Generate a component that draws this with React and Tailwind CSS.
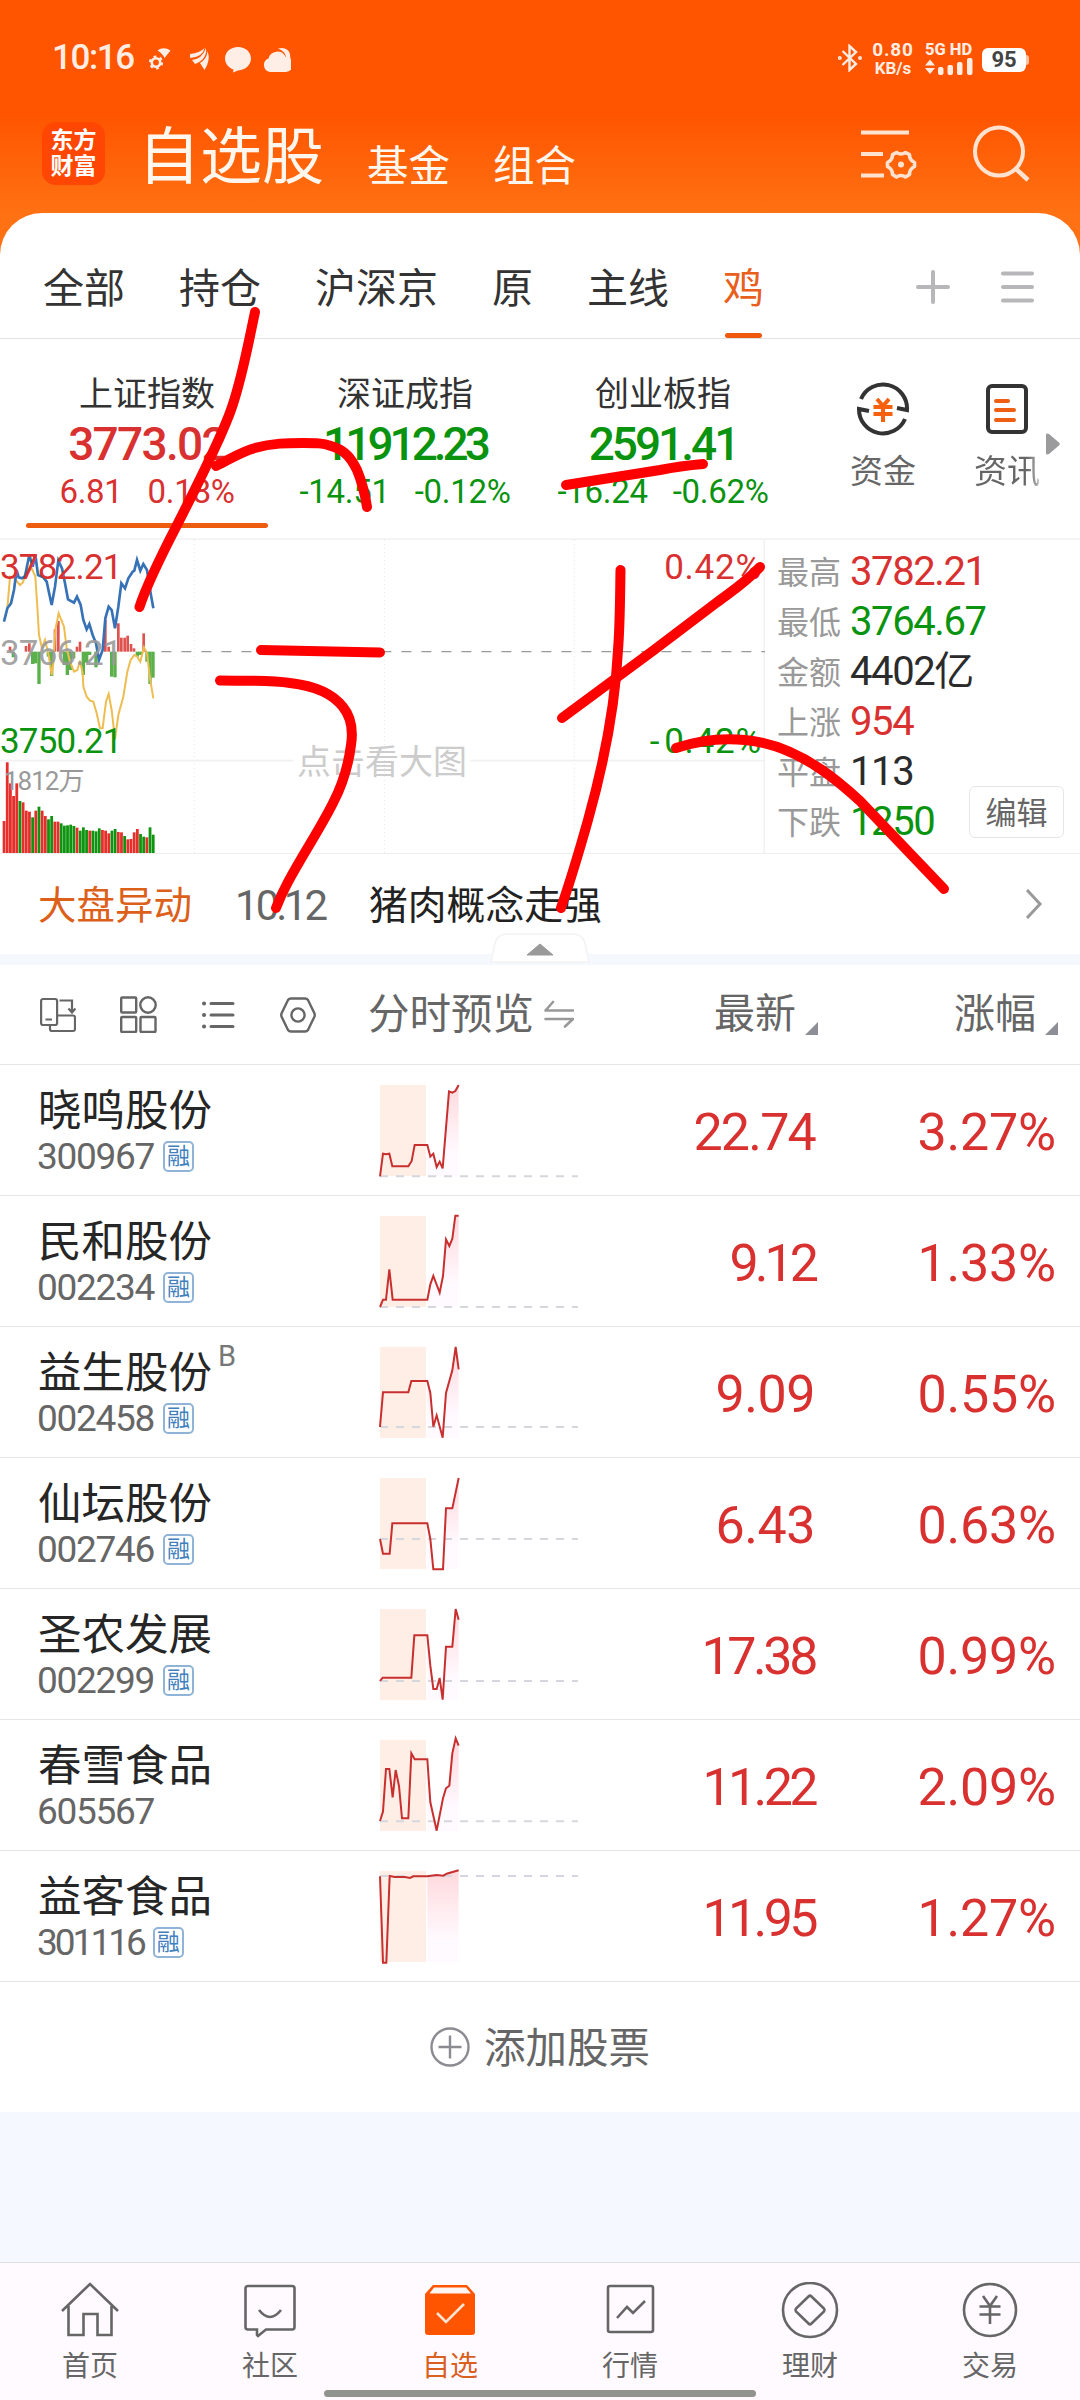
import React from 'react';

const RED = 'text-[#d93030]';
const GREEN = 'text-[#0a930f]';

const tabs = ['全部', '持仓', '沪深京', '原', '主线', '鸡'];

const indices = [
    { name: '上证指数', value: '3773.02', diff: '6.81', pct: '0.18%', color: RED, spacing: 'tracking-[-1.7px]', active: true },
    { name: '深证成指', value: '11912.23', diff: '-14.51', pct: '-0.12%', color: GREEN, spacing: 'tracking-[-4px]' },
    { name: '创业板指', value: '2591.41', diff: '-16.24', pct: '-0.62%', color: GREEN, spacing: 'tracking-[-3px]' },
];

const stats = [
    { label: '最高', value: '3782.21', color: RED },
    { label: '最低', value: '3764.67', color: GREEN },
    { label: '金额', value: '4402亿', color: 'text-[#2b2b2b]' },
    { label: '上涨', value: '954', color: RED },
    { label: '平盘', value: '113', color: 'text-[#2b2b2b]' },
    { label: '下跌', value: '1250', color: GREEN },
];

// base = y of the dashed previous-close line
const stocks = [
    { name: '晓鸣股份', code: '300967', margin: true, price: '22.74', spacing: 'tracking-[-1.8px]', pct: '3.27%', base: 274, line: '0,274 9,206 18,208 28,206 37,244 85,244 95,228 104,180 142,180 151,215 160,206 170,246 179,230 188,250 207,19 217,23 226,18 236,0' },
    { name: '民和股份', code: '002234', margin: true, price: '9.12', spacing: 'tracking-[-4px]', pct: '1.33%', base: 273, line: '0,273 9,251 18,251 28,160 38,251 142,251 151,205 160,180 179,230 189,180 198,70 208,90 217,68 226,-1 236,-1' },
    { name: '益生股份', code: '002458', margin: true, tag: 'B', price: '9.09', spacing: 'tracking-[-0.5px]', pct: '0.55%', base: 240, line: '0,240 9,136 85,136 94,102 142,102 151,138 160,239 170,205 188,272 198,138 217,70 227,0 236,67' },
    { name: '仙坛股份', code: '002746', margin: true, price: '6.43', spacing: 'tracking-[-0.5px]', pct: '0.63%', base: 183, line: '0,183 9,227 29,227 37,136 142,136 151,183 160,274 189,274 198,91 217,91 236,0' },
    { name: '圣农发展', code: '002299', margin: true, price: '17.38', spacing: 'tracking-[-3.4px]', pct: '0.99%', base: 216, line: '0,216 8,206 94,206 103,79 142,79 151,170 160,240 170,240 179,207 188,272 198,113 217,113 227,0 236,32' },
    { name: '春雪食品', code: '605567', margin: false, price: '11.22', spacing: 'tracking-[-3.6px]', pct: '2.09%', base: 244, line: '0,243 9,215 18,87 28,87 38,172 47,90 57,138 66,235 85,235 94,40 104,58 142,58 151,187 170,272 189,175 198,145 208,137 217,40 227,-5 236,17' },
    { name: '益客食品', code: '301116', margin: true, price: '11.95', spacing: 'tracking-[-3.6px]', pct: '1.27%', base: 15, line: '0,16 9,275 19,275 29,15 45,18 75,18 90,21 100,16 142,16 170,12 190,14 200,8 236,-2' },
];

const upBars = [[30, 320], [78, 318], [88, 310], [165, 268], [175, 243], [231, 320], [240, 305], [316, 240], [326, 320], [355, 250], [364, 293], [374, 293], [383, 287], [393, 312], [402, 325], [431, 280]];
const downBars = [[40, 352], [98, 372], [107, 370], [117, 432], [145, 350], [155, 408], [193, 375], [202, 405], [211, 390], [221, 355], [250, 405], [260, 368], [269, 345], [288, 382], [335, 410], [345, 412], [412, 350], [421, 345], [441, 365], [450, 432], [459, 413]];
const volumes = [843, 667, 730, 768, 730, 783, 787, 812, 815, 832, 812, 800, 812, 828, 838, 828, 845, 845, 850, 857, 856, 854, 858, 863, 872, 862, 870, 872, 872, 874, 865, 870, 872, 880, 872, 867, 876, 877, 888, 898, 897, 877, 867, 882, 890, 892, 862, 884];
const volumeSides = 'rrrrrgrrrgrgrrggrrgggggrgggrgggrrrggrrgrrrrggrgg';

const Spark = ({ line, base, id }) => {
    const tail = line.split(' ').filter((p) => Number(p.split(',')[0]) >= 142);
    return (
        <svg width="198" height="91" viewBox="0 0 594 273" className="overflow-visible">
            <defs>
                <linearGradient id={id} gradientUnits="userSpaceOnUse" x1="0" y1="0" x2="0" y2="273">
                    <stop offset="0" stopColor="#ffd9dd" />
                    <stop offset="0.75" stopColor="#fffaff" />
                </linearGradient>
            </defs>
            <rect width="138" height="273" fill="#ffeee6" />
            <polygon points={`142,273 ${tail.join(' ')} 236,273`} fill={`url(#${id})`} />
            <path d={`M0 ${base}H594`} stroke="#d6d6de" strokeWidth="6" strokeDasharray="24 24" />
            <polyline points={line} fill="none" stroke="#c8302f" strokeWidth="6" />
        </svg>
    );
};

const StatusBar = () => (
    <div className="flex h-[116px] items-center pl-[52px] pr-[51px] text-[#ffece2]">
        <span className="mt-[-2px] w-[97px] text-[35px] font-medium leading-none tracking-[-1.4px]">10:16</span>
        <svg width="142" height="28" viewBox="0 0 142 28" fill="#ffeee6" className="mt-px">
            <circle cx="7" cy="17.500" r="4.200" fill="none" stroke="#ffeee6" strokeWidth="2.600" />
            <circle cx="7" cy="17.500" r="6" fill="none" stroke="#ffeee6" strokeWidth="2.200" strokeDasharray="2.800 3.480" />
            <path d="M8.500 5.500Q14.500 1 21.500 5.500L15.500 13Q14 9 8.500 5.500Z" />
            <path d="M41 9Q51 8 55.500 3Q54 12 41 13ZM43 15Q53 14 57 3Q58.500 14 46 19ZM51 18Q58 14 58.500 6Q62 15 55.500 25Z" />
            <path d="M89 2c7.500 0 13 5 13 11.500S96.500 25 89 25.500l-5 2 .5-3C79.500 22.500 76 18.500 76 13.500 76 7 81.500 2 89 2Z" />
            <path d="M121 27a7 7 0 0 1-1.500-13.500a9 9 0 0 1 17-1.500a7.500 7.500 0 0 1 .5 15Z" />
            <path d="M129 3.500q7-2 11 3q2 4 1 12q-1-4-4-5q0-7-8-10Z" />
        </svg>
        <div className="ml-auto flex items-center">
            <svg width="24" height="28" viewBox="0 0 24 28" fill="none" stroke="#ffece2" strokeWidth="2.400" className="mr-[9px]">
                <path d="M4.500 7L18 20L11.500 26V2L18 8L4.500 21" />
                <circle cx="1.800" cy="14" r="0.800" />
                <circle cx="22" cy="14" r="0.800" />
            </svg>
            <div className="mr-[10px] w-[44px] text-center text-[17px] font-bold leading-[18px]">
                <div className="text-[19px] leading-[19px] tracking-[0.8px]">0.80</div>
                <div>KB/s</div>
            </div>
            <div className="mr-[8px] w-[49px]">
                <div className="whitespace-nowrap text-[16.5px] font-extrabold leading-[16px]">5G HD</div>
                <svg width="49" height="17" viewBox="0 0 49 17" fill="#ffece2">
                    <path d="M0 7.500L5 1.500L10 7.500ZM0 10L5 16L10 10Z" />
                    <rect x="13" y="9" width="5.500" height="8" rx="2" />
                    <rect x="22.500" y="7" width="5.500" height="10" rx="2" />
                    <rect x="32" y="4" width="5.500" height="13" rx="2" />
                    <rect x="42" y="0" width="5.500" height="17" rx="2" />
                </svg>
            </div>
            <div className="mt-[3px] flex items-center">
                <div className="flex h-[24px] w-[44px] items-center justify-center rounded-[6px] bg-white text-[22px] font-bold leading-none text-[#444]">95</div>
                <div className="h-[10px] w-[3px] rounded-r bg-[#ffc4a5]" />
            </div>
        </div>
    </div>
);

const TitleBar = () => (
    <div className="flex h-[97px] items-start pl-[42px] pr-[50px] text-[#fff7ee]">
        <div className="mt-[6px] flex h-[63px] w-[63px] flex-col items-center justify-center rounded-[14px] bg-[#ff4602] text-[23px] font-bold leading-[26px] text-white">
            <span>东方</span>
            <span>财富</span>
        </div>
        <span className="ml-[33px] mt-[11px] text-[62px] leading-none">自选股</span>
        <span className="ml-[43px] mt-[30px] text-[41.5px] leading-none">基金</span>
        <span className="ml-[43px] mt-[30px] text-[41.5px] leading-none">组合</span>
        <svg width="58" height="54" viewBox="0 0 58 54" fill="none" stroke="#ffe3d0" strokeWidth="4" className="ml-auto mt-[12px]">
            <path d="M1 4.500H49M1 26H23M1 47.500H24" />
            <path d="M36.500 24.500Q41 27.500 45.500 24.500L49.500 26.700Q49.500 32 54.500 34.500V38.500Q49.500 41 49.500 46.500L45.500 49Q41 46 36.500 49L32.500 46.500Q32.500 41 27.500 38.500V34.500Q32.500 32 32.500 26.700Z" strokeLinejoin="round" strokeWidth="3.600" />
            <circle cx="41" cy="36.500" r="3" fill="#ffe3d0" stroke="none" />
        </svg>
        <svg width="58" height="58" viewBox="0 0 58 58" fill="none" stroke="#ffe3d0" strokeWidth="4" className="ml-[54px] mt-[9px]">
            <circle cx="27" cy="26.500" r="24" />
            <path d="M43 43L56 55" strokeWidth="4.500" />
        </svg>
    </div>
);

const TabRow = () => (
    <div className="flex h-[126px] items-center gap-[54px] border-b border-[#e2e2e2] pl-[43px] pr-[46px]">
        {tabs.map((t) => (
            <div key={t} className={t === '鸡' ? 'relative flex h-full items-center text-[#e8601c]' : 'relative flex h-full items-center text-[#333]'}>
                <span className="mt-[27px] text-[41px] leading-none">{t}</span>
                {t === '鸡' && <div className="absolute bottom-0 left-[2px] h-[5px] w-[37px] rounded-full bg-[#f0580d]" />}
            </div>
        ))}
        <svg width="34" height="34" viewBox="0 0 34 34" stroke="#b7b7ba" strokeWidth="4" strokeLinecap="round" className="ml-auto mt-[22px]">
            <path d="M17 2V32M2 17H32" />
        </svg>
        <svg width="33" height="34" viewBox="0 0 33 34" stroke="#b7b7ba" strokeWidth="4" strokeLinecap="round" className="ml-[-3px] mt-[22px]">
            <path d="M2 3.500H31M2 17H31M2 30.500H31" />
        </svg>
    </div>
);

const IndexRow = () => (
    <div className="relative flex h-[201px] border-b-2 border-[#f4f4f5] pl-[18px]">
        {indices.map((x) => (
            <div key={x.name} className="relative flex w-[258px] flex-col items-center">
                <span className="mt-[38px] text-[34px] leading-none text-[#333]">{x.name}</span>
                <span className={`mt-[10px] text-[46px] font-medium leading-none ${x.spacing} ${x.color}`}>{x.value}</span>
                <div className={`mt-[8px] flex gap-[25px] whitespace-nowrap text-[33px] leading-none tracking-[-0.3px] ${x.color}`}>
                    <span>{x.diff}</span>
                    <span>{x.pct}</span>
                </div>
                {x.active && <div className="absolute bottom-[10px] left-[8px] h-[5px] w-[242px] rounded-full bg-[#ee5c10]" />}
            </div>
        ))}
        <div className="ml-[58px] flex flex-col items-center">
            <svg width="54" height="54" viewBox="0 0 54 54" fill="none" stroke="#333" strokeWidth="4" className="mt-[43px]">
                <path d="M5 17A24 24 0 0 1 51 28L41 26" />
                <path d="M49 37A24 24 0 0 1 3 27L13 29" />
                <path d="M21 17L27 24L33 17M17.500 25H36.500M17.500 32H36.500M27 24V40" stroke="#f6600e" />
            </svg>
            <span className="mt-[19px] text-[33px] leading-none text-[#666]">资金</span>
        </div>
        <div className="ml-[58px] flex flex-col items-center">
            <svg width="42" height="50" viewBox="0 0 42 50" fill="none" stroke="#333" strokeWidth="4" strokeLinecap="round" className="mt-[45px]">
                <rect x="2" y="2" width="38" height="46" rx="4" />
                <path d="M10 17H22M10 26H28M10 36H28" stroke="#ee5f14" />
            </svg>
            <span className="mt-[21px] bg-gradient-to-r from-[#666] from-80% to-[#bbb] bg-clip-text text-[33px] leading-none text-transparent">资讯</span>
        </div>
        <svg width="14" height="22" viewBox="0 0 14 22" fill="#9b9b9e" className="ml-[6px] mt-[94px]">
            <path d="M0 1.500Q0 0 3 1L13.500 10Q14 11 13.500 12L3 21Q0 22 0 20.500Z" />
        </svg>
    </div>
);

const IndexChart = () => (
    <div className="relative h-[313px] w-[765px]">
        <svg width="765" height="313" viewBox="0 0 2295 939" fill="none">
            <path d="M583 0V939M1153 0V939M1723 0V939" stroke="#e6e6e6" strokeWidth="3" strokeDasharray="3 9" />
            <path d="M0 662H880M1410 662H2295M2293 0V939" stroke="#f3f0f2" strokeWidth="5" />
            <path d="M484 335H2295" stroke="#999" strokeWidth="4" strokeDasharray="30 30" />
            {upBars.map(([x, y]) => <rect key={x} x={x - 4} y={y} width="8" height={335 - y} fill="#dd5350" />)}
            {downBars.map(([x, y]) => <rect key={x} x={x - 5} y="335" width="10" height={y - 335} fill="#5cb04c" />)}
            {volumes.map((y, i) => (
                <rect key={i} x={8 + i * 9.52} y={y} width="8.400" height={939 - y} fill={volumeSides[i] === 'r' ? '#e62f2b' : '#0e9410'} />
            ))}
            <polyline points="22,205 30,110 40,112 60,135 68,128 80,100 95,85 106,110 112,200 117,285 126,325 135,300 145,340 155,405 160,370 166,270 176,220 192,260 200,325 210,365 222,395 232,390 240,362 248,400 250,440 260,470 270,482 280,485 290,520 300,565 308,565 318,485 326,462 335,510 345,598 355,525 370,470 382,395 392,360 403,345 412,350 421,365 432,322 441,340 450,415 460,475" stroke="#eebd50" strokeWidth="6" />
            <polyline points="12,245 22,205 33,190 42,150 50,90 56,112 66,115 75,108 88,45 98,80 106,45 114,105 130,112 140,125 155,195 165,140 175,62 186,85 195,130 204,178 222,188 231,170 242,195 250,240 260,268 268,252 278,285 288,310 297,360 308,330 316,235 326,200 335,210 345,265 355,200 364,130 375,145 385,115 398,95 403,92 411,60 421,92 430,72 441,90 452,160 460,205" stroke="#3672b5" strokeWidth="8" />
        </svg>
        <div className="absolute left-0 top-[10px] text-[35px] leading-none tracking-[-0.8px] text-[#d93030]">3782.21</div>
        <div className="absolute left-0 top-[96px] text-[35px] leading-none tracking-[-0.8px] text-[#999]/90">3766.21</div>
        <div className="absolute left-0 top-[184px] text-[35px] leading-none tracking-[-0.8px] text-[#0a930f]">3750.21</div>
        <div className="absolute left-[4px] top-[228px] text-[26px] leading-none tracking-[-1px] text-[#999]">1812万</div>
        <div className="absolute right-[3px] top-[10px] text-[35px] leading-none tracking-[0.8px] text-[#d93030]">0.42%</div>
        <div className="absolute right-[3px] top-[184px] text-[35px] leading-none tracking-[0.8px] text-[#0a930f]"><span className="mr-[4px]">-</span>0.42%</div>
        <div className="absolute left-[297px] top-[205px] text-[34px] leading-none text-[#ccc]">点击看大图</div>
    </div>
);

const MarketPanel = () => (
    <div className="flex h-[314px] border-b border-[#eeeeef]">
        <IndexChart />
        <div className="relative flex-1 pl-[12px] pt-[7px]">
            {stats.map((s) => (
                <div key={s.label} className="flex h-[50px] items-center leading-none">
                    <span className="mt-[2px] w-[73px] text-[32px] text-[#999]">{s.label}</span>
                    <span className={`text-[40px] tracking-[-1.4px] ${s.color}`}>{s.value}</span>
                </div>
            ))}
            <div className="absolute right-[16px] top-[246px] flex h-[52px] w-[95px] items-center justify-center rounded-[6px] border border-[#e6e6e6] bg-white pt-[2px] text-[31px] leading-none text-[#666]">编辑</div>
        </div>
    </div>
);

const NewsRow = () => (
    <div className="relative flex h-[111px] items-start border-b-[11px] border-[#f5f9fe] pl-[38px] pr-[37px] leading-none">
        <span className="mt-[33px] text-[38.5px] text-[#dd601a]">大盘异动</span>
        <span className="ml-[43px] mt-[31px] w-[96px] text-[42px] tracking-[-2.9px] text-[#666]">10:12</span>
        <span className="ml-[38px] mt-[33px] text-[38.8px] text-[#222]">猪肉概念走强</span>
        <svg width="18" height="32" viewBox="0 0 18 32" fill="none" stroke="#999" strokeWidth="3" className="ml-auto mt-[34px]">
            <path d="M2 2L15 16L2 30" />
        </svg>
        <svg width="100" height="30" viewBox="0 0 100 30" className="absolute left-[490px] top-[79px]">
            <path d="M1 29L5 10Q7 1 18 1H82Q93 1 95 10L99 29Z" fill="#fff" stroke="#f2f2f4" strokeWidth="1.500" />
            <path d="M37 22L50 11L63 22Z" fill="#999" stroke="#999" strokeLinejoin="round" />
        </svg>
    </div>
);

const SortMark = () => (
    <svg width="13" height="13" viewBox="0 0 13 13" className="ml-[9px] mt-[28px]">
        <path d="M13 0V13H0Z" fill="#8e8e96" />
    </svg>
);

const ListHeader = () => (
    <div className="flex h-[100px] items-center border-b border-[#e6e6e6] pl-[40px] pr-[22px] leading-none text-[#666]">
        <svg width="36" height="36" viewBox="0 0 36 36" fill="none" stroke="#666" strokeWidth="2.200" className="mr-[44px]">
            <rect x="1.100" y="2" width="16" height="26" rx="2" />
            <path d="M5.500 22.500H12M19.500 3.500H32V14M28.500 11.500L32 15.500L35.500 11.500M17 18.500H33Q35 18.500 35 20.500V32Q35 34 33 34H12Q10 34 10 32V28" />
        </svg>
        <svg width="37" height="37" viewBox="0 0 37 37" fill="none" stroke="#666" strokeWidth="2.400" className="mr-[45px]">
            <rect x="1.200" y="1.500" width="15" height="15" rx="1" />
            <circle cx="28" cy="9" r="7.700" />
            <rect x="1.200" y="21" width="15" height="15" rx="1" />
            <rect x="20.500" y="21" width="15" height="15" rx="1" />
        </svg>
        <svg width="34" height="30" viewBox="0 0 34 30" fill="none" stroke="#666" strokeWidth="3" strokeLinecap="round" className="mr-[44px]">
            <path d="M9 3.500H31M9 15H31M9 26.500H31" />
            <path d="M2 3.500H2.100M2 15H2.100M2 26.500H2.100" strokeWidth="4" />
        </svg>
        <svg width="36" height="36" viewBox="0 0 36 36" fill="none" stroke="#666" strokeWidth="2.400">
            <path d="M11 1.500H25Q27 1.500 28 3L34.500 16.500Q35 18 34.500 19.500L28 33Q27 34.500 25 34.500H11Q9 34.500 8 33L1.500 19.500Q1 18 1.500 16.500L8 3Q9 1.500 11 1.500Z" />
            <circle cx="18" cy="18" r="6.600" />
        </svg>
        <span className="ml-[52px] text-[41.5px]">分时预览</span>
        <svg width="30" height="28" viewBox="0 0 30 28" fill="none" stroke="#999" strokeWidth="2.600" strokeLinecap="round" strokeLinejoin="round" className="ml-[10px] mt-[-2px]">
            <path d="M9 2L1.500 10.500H29M1.500 19H29L21 26.500" />
        </svg>
        <div className="ml-auto flex items-center">
            <span className="text-[41px]">最新</span>
            <SortMark />
        </div>
        <div className="ml-[136px] flex items-center">
            <span className="text-[41px]">涨幅</span>
            <SortMark />
        </div>
    </div>
);

const StockRow = ({ stock }) => (
    <div className="flex h-[131px] items-center border-b border-[#e6e6e6] pl-[37px] pr-[24px] leading-none">
        <div className="mt-[5px] w-[343px]">
            <div className="ml-px flex text-[43.5px] text-[#262626]">
                <span>{stock.name}</span>
                {stock.tag && <span className="ml-[6px] mt-[-10px] text-[29px] text-[#777]">{stock.tag}</span>}
            </div>
            <div className="mt-[4px] flex items-center text-[37px] text-[#666]">
                <span className={stock.code === '301116' ? 'tracking-[-3px]' : 'tracking-[-1.3px]'}>{stock.code}</span>
                {stock.margin && (
                    <span className="ml-[9px] flex h-[31px] w-[31px] items-center justify-center rounded-[5px] border-2 border-[#8fb4d8] text-[23px] text-[#4180bd]">融</span>
                )}
            </div>
        </div>
        <Spark line={stock.line} base={stock.base} id={`fill-${stock.code}`} />
        <span className={`mt-[6px] w-[237px] text-right text-[52px] text-[#d93030] ${stock.spacing}`}>{stock.price}</span>
        <span className="mt-[6px] flex-1 text-right text-[52px] tracking-[-0.2px] text-[#d93030]">{stock.pct}</span>
    </div>
);

const navItems = [
    { label: '首页', icon: <path d="M2 29L30 2L58 29M8.500 24V53H23.500V32H37.500V53H51.500V24" /> },
    { label: '社区', icon: <path d="M8 4H52Q54.500 4 54.500 6.500V45Q54.500 47.500 52 47.500H26L18 54L17 53V47.500H8Q5.500 47.500 5.500 45V6.500Q5.500 4 8 4ZM19 28Q30 42 41 28" /> },
    {
        label: '自选',
        active: true,
        icon: (
            <>
                <path d="M5 12L13 3H47L55 12V50Q55 53 52 53H8Q5 53 5 50Z" fill="#ff5500" stroke="none" />
                <path d="M14 5.500H46L51 11.500H9.500Z" fill="#fff5f2" stroke="none" />
                <path d="M17 31L26 40L44 22" stroke="#ffe3d2" />
            </>
        ),
    },
    { label: '行情', icon: <><rect x="8" y="4" width="45" height="46" rx="2" /><path d="M17 36L27 25L33 31L45 19" /></> },
    { label: '理财', icon: <><circle cx="30" cy="28" r="27" /><path d="M28.500 14.500Q30 13 31.500 14.500L44 26.500Q45 28 44 29.500L31.500 41.500Q30 43 28.500 41.500L16 29.500Q15 28 16 26.500Z" /></> },
    { label: '交易', icon: <><circle cx="30" cy="28" r="26" /><path d="M23 14L30 24L37 14M19.500 24.500H40.500M19.500 32.500H40.500M30 24V42" /></> },
];

const BottomNav = () => (
    <div className="relative flex h-[138px] border-t border-[#dfdfe2] bg-[#fffaff]">
        {navItems.map((n) => (
            <div key={n.label} className="flex flex-1 flex-col items-center">
                <svg width="60" height="58" viewBox="0 0 60 58" fill="none" stroke="#666" strokeWidth="2.600" className="mt-[19px]">
                    {n.icon}
                </svg>
                <span className={n.active ? 'mt-[13px] text-[28px] leading-none text-[#d9601f]' : 'mt-[13px] text-[28px] leading-none text-[#666]'}>{n.label}</span>
            </div>
        ))}
        <div className="absolute bottom-[3px] left-[324px] h-[7px] w-[432px] rounded-full bg-[#91938f]" />
    </div>
);

// hand-drawn marker strokes over the page
const Scribble = () => (
    <svg width="1080" height="2400" viewBox="0 0 1080 2400" fill="none" stroke="#ff0000" strokeWidth="10" strokeLinecap="round" strokeLinejoin="round" className="pointer-events-none absolute left-0 top-0">
        <path d="M255 312C247 350 242 378 232 407C223 434 200 480 176 527C160 558 147 584 139.500 607" />
        <path d="M216 466C231 459 240 452 255 448C272 443 288 443 303 443C316 443 323 443 331 446C346 450 352 460 357 470C362 482 365 494 367 507" />
        <path d="M566 485L660 470Q680 466 703 464" />
        <path d="M261 650L380 652.500" />
        <path d="M220 680.500C250 681 270 680 290 683C316 686 333 694 343 707C352 718 353 732 351 745C348 768 343 784 333 803C320 829 303 854 288 882Q281 895 276 908" />
        <path d="M620.500 570C620 600 620 625 618 650C615 710 602 770 588 820C579 852 572 876 561 908" />
        <path d="M760 567C745 583 732 591 716 603L654 650L562 718" />
        <path d="M676 748C700 740 725 738 745 740C778 743 803 757 822 770C838 781 848 790 860 801L944 889" />
    </svg>
);

export default function App() {
    return (
        <div className="relative flex h-[2400px] w-[1080px] flex-col overflow-hidden bg-[#f5f9ff] font-[Roboto,'Noto_Sans_CJK_SC',sans-serif]">
            <div className="bg-[linear-gradient(180deg,#ff5500_0px,#ff5500_115px,#ff7113_213px,#ff7113_270px)]">
                <StatusBar />
                <TitleBar />
                <div className="rounded-t-[42px] bg-white">
                    <TabRow />
                    <IndexRow />
                </div>
            </div>
            <div className="bg-white">
                <MarketPanel />
                <NewsRow />
                <ListHeader />
                {stocks.map((s) => <StockRow key={s.code} stock={s} />)}
                <div className="flex h-[130px] items-center justify-center text-[41.5px] leading-none text-[#666]">
                    <svg width="40" height="40" viewBox="0 0 40 40" fill="none" stroke="#8b8b92" strokeWidth="2.400" className="mr-[14px]">
                        <circle cx="20" cy="20" r="18.500" />
                        <path d="M20 8.500V31.500M8.500 20H31.500" />
                    </svg>
                    <span className="mt-[4px]">添加股票</span>
                </div>
            </div>
            <div className="flex-1" />
            <BottomNav />
            <Scribble />
        </div>
    );
}
